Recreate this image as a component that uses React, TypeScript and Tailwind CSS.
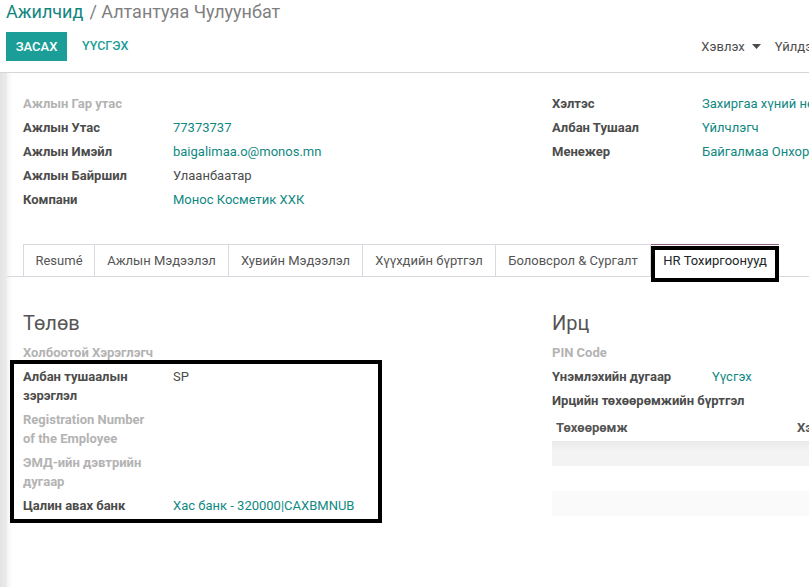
import React from 'react';

const teal = 'text-[#0f8882]';

type Row = { label: string; value?: string; muted?: boolean; link?: boolean; nowrap?: boolean };

const topLeft: Row[] = [
  { label: 'Ажлын Гар утас', muted: true },
  { label: 'Ажлын Утас', value: '77373737', link: true },
  { label: 'Ажлын Имэйл', value: 'baigalimaa.o@monos.mn', link: true },
  { label: 'Ажлын Байршил', value: 'Улаанбаатар' },
  { label: 'Компани', value: 'Монос Косметик ХХК', link: true },
];

const topRight: Row[] = [
  { label: 'Хэлтэс', value: 'Захиргаа хүний нөөц', link: true },
  { label: 'Албан Тушаал', value: 'Үйлчлэгч', link: true },
  { label: 'Менежер', value: 'Байгалмаа Онхорбаяр', link: true },
];

const tabs = [
  { name: 'Resumé', w: 'w-[72px]' },
  { name: 'Ажлын Мэдээлэл', w: 'w-[134px]' },
  { name: 'Хувийн Мэдээлэл', w: 'w-[134px]' },
  { name: 'Хүүхдийн бүртгэл', w: 'w-[133px]' },
  { name: 'Боловсрол & Сургалт', w: 'w-[155px]' },
];

const Field = ({ label, value, muted, link, nowrap, labelW = 'w-[150px]' }: Row & { labelW?: string }) => (
  <div className="flex py-[2.5px] leading-[19px]">
    <div
      className={`${labelW} shrink-0 pr-[20px] font-bold ${nowrap ? 'whitespace-nowrap' : ''} ${
        muted ? 'text-[#b3b3b3]' : 'text-[#4c4c4c]'
      }`}
    >
      {label}
    </div>
    {value && (
      <div className={`whitespace-nowrap ${link ? teal : 'text-[#4c4c4c]'}`}>{value}</div>
    )}
  </div>
);

export default function App() {
  return (
    <div className="w-[809px] h-[587px] overflow-hidden bg-white text-[13px] text-[#4c4c4c] font-['Roboto',sans-serif]">
      {/* control panel */}
      <div className="h-[73px] border-b border-[#d6d6d6] pl-[6px] pr-0">
        <div className="flex items-center h-[24px] text-[18px] leading-[24px] whitespace-nowrap">
          <span className="text-[#11867f]">Ажилчид</span>
          <span className="text-[#7f7f7f] ml-[6px]">/ Алтантуяа Чулуунбат</span>
        </div>
        <div className="flex items-center mt-[8px] whitespace-nowrap">
          <button className="shrink-0 w-[61px] h-[29px] bg-[#1b9e98] text-white text-[13px] font-medium">ЗАСАХ</button>
          <button className="shrink-0 ml-[15px] text-[#1b9e98] text-[12.5px] font-medium">ҮҮСГЭХ</button>
          <div className="shrink-0 ml-[573px] flex items-center text-[13px] text-[#4c4c4c]">
            <span>Хэвлэх</span>
            <svg width="9" height="5" viewBox="0 0 9 5" className="ml-[7px]">
              <path d="M0 0h9L4.5 5z" fill="#4c4c4c" />
            </svg>
            <span className="ml-[14px]">Үйлдэл</span>
          </div>
        </div>
      </div>

      <div className="flex h-[514px]">
        <div className="w-[7px] shrink-0 bg-gradient-to-r from-[#e3e3e3] to-[#ececec]" />
        <div className="flex-1 min-w-0 pl-[16px] pt-[18px] shadow-[inset_5px_0_5px_-3px_rgba(0,0,0,0.06)]">
          {/* header fields */}
          <div className="grid grid-cols-[529px_1fr]">
            <div>
              {topLeft.map((r) => (
                <Field key={r.label} nowrap {...r} />
              ))}
            </div>
            <div>
              {topRight.map((r) => (
                <Field key={r.label} nowrap {...r} />
              ))}
            </div>
          </div>

          {/* tabs */}
          <div className="mt-[33px] -ml-[16px] pl-[16px] flex h-[33px] border-b border-[#d6d9dd] whitespace-nowrap">
            {tabs.map((t, i) => (
              <div
                key={t.name}
                className={`${t.w} h-[32px] flex items-center justify-center border-t border-r border-[#d6d9dd] text-[#555] ${i === 0 ? 'border-l' : ''}`}
              >
                {t.name}
              </div>
            ))}
            <div className="relative w-[128px] h-[33px] flex items-center justify-center border-t border-[#8b5f84] bg-white text-[#212529]">
              HR Тохиргоонууд
              <div className="absolute left-0 right-0 top-[1px] bottom-[-5px] border-[4px] border-black" />
            </div>
          </div>

          {/* sections */}
          <div className="grid grid-cols-[529px_1fr] mt-[32px]">
            <div>
              <h2 className="text-[20px] leading-[28px] text-[#555]">Төлөв</h2>
              <div className="mt-[3px]">
                <Field label="Холбоотой Хэрэглэгч" muted nowrap />
                <div className="relative w-[346px]">
                  <Field label="Албан тушаалын зэрэглэл" value="SP" />
                  <Field label="Registration Number of the Employee" muted />
                  <Field label="ЭМД-ийн дэвтрийн дугаар" muted />
                  <Field label="Цалин авах банк" value="Хас банк - 320000|CAXBMNUB" link />
                  <div className="absolute left-[-13px] right-[-13px] top-[-4px] bottom-[-6px] border-[4px] border-black" />
                </div>
              </div>
            </div>
            <div>
              <h2 className="text-[20px] leading-[28px] text-[#555]">Ирц</h2>
              <div className="mt-[3px]">
                <Field label="PIN Code" muted nowrap />
                <Field label="Үнэмлэхийн дугаар" value="Үүсгэх" link nowrap labelW="w-[160px]" />
                <div className="py-[2.5px] leading-[19px] font-bold text-[#4c4c4c] whitespace-nowrap">
                  Ирцийн төхөөрөмжийн бүртгэл
                </div>
                <div className="mt-[3px]">
                  <div className="flex h-[26px] items-center font-bold text-[#555] whitespace-nowrap">
                    <span className="pl-[4px] w-[245px]">Төхөөрөмж</span>
                    <span>Хэрэглэгч</span>
                  </div>
                  <div className="h-[25px] bg-gradient-to-b from-[#e9e9e9] to-[#f3f3f3] to-40%" />
                  <div className="h-[25px] bg-white" />
                  <div className="h-[25px] bg-[#fafafa]" />
                </div>
              </div>
            </div>
          </div>
        </div>
      </div>
    </div>
  );
}
